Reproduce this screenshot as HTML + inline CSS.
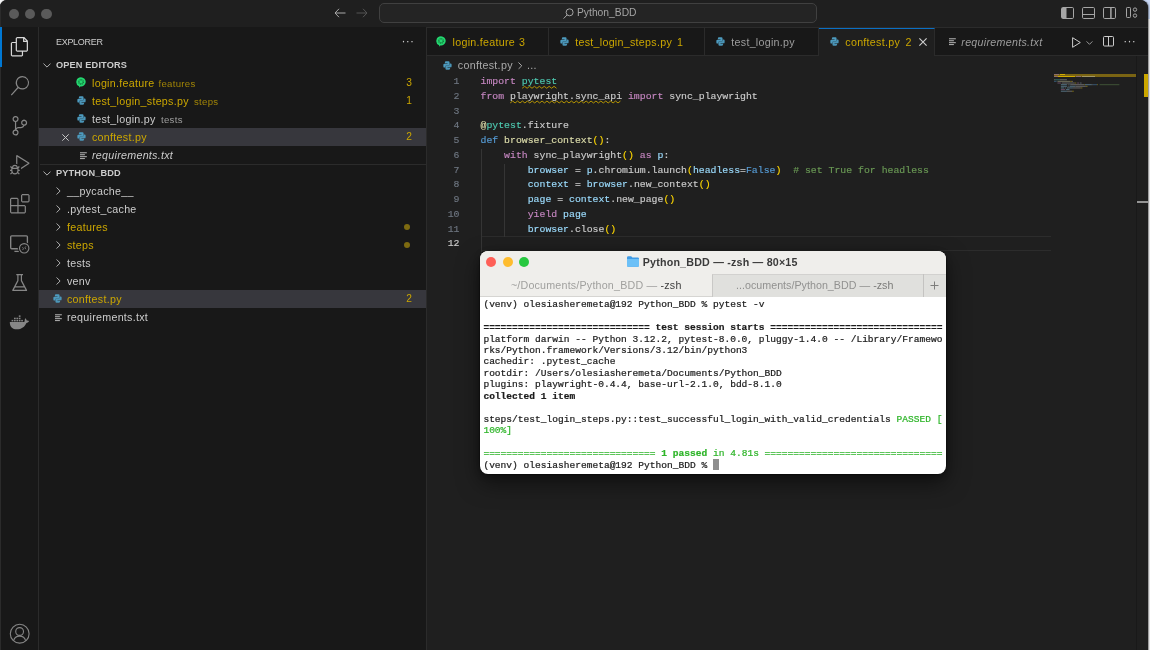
<!DOCTYPE html>
<html>
<head>
<meta charset="utf-8">
<title>conftest.py - Python_BDD</title>
<style>
*{box-sizing:border-box;margin:0;padding:0}
html,body{width:1150px;height:650px;overflow:hidden;background:#f7f7f8;font-family:"Liberation Sans",sans-serif;}
#win{will-change:transform;position:absolute;left:0;top:0;width:1148px;height:652px;background:#181818;border-radius:7px 8px 0 0;overflow:hidden;box-shadow:0.500px 0 1.500px rgba(0,0,0,.45);}
.abs{position:absolute}
/* title bar */
#title{position:absolute;left:0;top:0;width:1148px;height:27.500px;background:#1f1f1f;border-bottom:1px solid #2b2b2b;}
.tl{position:absolute;top:8.500px;width:10.300px;height:10.300px;border-radius:50%;background:#5a5a5a;}
#search{position:absolute;left:379px;top:3px;width:438px;height:20px;border:1px solid #404040;border-radius:5px;background:#242424;}
#search span{position:absolute;left:197px;top:3.200px;font-size:10.300px;color:#a4a4a4;letter-spacing:0px;}
/* activity bar */
#act{position:absolute;left:0;top:27px;width:39px;height:623px;background:#181818;border-right:1px solid #2b2b2b;}
#act:before{content:"";position:absolute;left:0;top:-27px;width:1px;height:650px;background:#2b2b2b;}
#act .ind{position:absolute;left:0;top:0;width:2px;height:40px;background:#0078d4;}
#act svg{position:absolute;left:8px;}
/* sidebar */
#side{position:absolute;left:39px;top:27px;width:388px;height:623px;background:#181818;border-right:1px solid #2b2b2b;}
.row{position:absolute;left:0;width:386px;height:18px;line-height:18px;font-size:10.700px;letter-spacing:0.280px;color:#cccccc;white-space:nowrap;}
.row.sel{background:#37373d;box-shadow:-1px 0 0 #37373d;}
.row .t{position:absolute;top:0;}
.row .d{position:absolute;top:0.500px;font-size:9.600px;letter-spacing:0.300px;}
.row .b{position:absolute;right:14px;top:0;font-size:10.200px;color:#cca700;letter-spacing:0}
.y{color:#cca700}
.hdr{position:absolute;font-size:9.200px;letter-spacing:0.150px;font-weight:bold;color:#cccccc;line-height:18px;height:18px;white-space:nowrap;}
.dot{position:absolute;left:364px;width:6px;height:6px;border-radius:50%;background:#7d6a10;}
svg{display:block;overflow:visible}


/* terminal */
#term{position:absolute;left:480px;top:251px;width:466px;height:223px;border-radius:8px;background:#ffffff;box-shadow:0 0 0 0.500px rgba(0,0,0,.55),0 9px 22px rgba(0,0,0,.5),0 2px 6px rgba(0,0,0,.3);overflow:hidden;}
#term .hd{position:absolute;left:0;top:0;width:466px;height:46px;background:#efeeeb;border-bottom:1px solid #d6d5d2;}
#term .tlt{position:absolute;top:6.100px;width:10px;height:10px;border-radius:50%;}
#tt{position:absolute;left:0;top:53.900px;font-family:"Liberation Mono",monospace;font-size:9.572px;line-height:11.450px;color:#1c1c1c;white-space:pre;}
#tt div{position:absolute;left:3.400px;height:11.450px;-webkit-text-stroke-width:0.220px}
.g{color:#2fb52a}
/* tabs */
#tabs{position:absolute;left:427px;top:27.500px;width:721px;height:28px;background:#181818;border-bottom:1px solid #2b2b2b;}
.tab{position:absolute;top:0;height:28px;border-right:1px solid #2b2b2b;font-size:10.700px;letter-spacing:0.280px;line-height:28px;color:#9d9d9d;white-space:nowrap;}
.tab.act{background:#1f1f1f;border-top:1.200px solid #0a6fc4;height:29px;line-height:26.800px;}
.tab span{position:absolute;top:0.500px}
.tab svg{position:absolute}
/* code */
#code{position:absolute;left:0;top:75.250px;-webkit-text-stroke-width:0.150px;width:721px;font-family:"Liberation Mono",monospace;font-size:9.847px;line-height:14.730px;color:#cccccc;white-space:pre;}
.ln{position:absolute;left:0;width:459.500px;text-align:right;color:#6e7681;height:14.730px;}
.cl{position:absolute;left:480.500px;height:14.730px;}
.k{color:#c586c0}.m{color:#4ec9b0}.b{color:#569cd6}.f{color:#dcdcaa}.v{color:#9cdcfe}.c{color:#6a9955}.p{color:#ffd700}
.sq{}
</style>
</head>
<body>
<div style="position:absolute;left:1140px;top:0;width:10px;height:19px;background:#c9d9f6"></div>
<div id="win">
<svg width="0" height="0" style="position:absolute">
<defs>
<symbol id="py" viewBox="0 0 10 10">
  <path fill="#4d9bbf" d="M3.3 0.4 H6 A1.3 1.3 0 0 1 7.3 1.7 V3.9 A1.1 1.1 0 0 1 6.2 5 H3.9 A1.3 1.3 0 0 0 2.6 6.3 V7.3 H1.7 A1.3 1.3 0 0 1 0.4 6 V4.3 A1.3 1.3 0 0 1 1.7 3 H5 V2.5 H2.1 V1.6 A1.2 1.2 0 0 1 3.3 0.4 Z"/>
  <path fill="#4d9bbf" d="M6.7 9.6 H4 A1.3 1.3 0 0 1 2.7 8.3 V6.1 A1.1 1.1 0 0 1 3.8 5 H6.1 A1.3 1.3 0 0 0 7.4 3.700 V2.7 H8.3 A1.3 1.3 0 0 1 9.6 4 V5.7 A1.3 1.3 0 0 1 8.3 7 H5 V7.5 H7.9 V8.4 A1.2 1.2 0 0 1 6.700 9.600 Z" opacity="0.95"/>
</symbol>
<symbol id="cuke" viewBox="0 0 10 11">
  <path fill="#23d66f" d="M5 0.2 A4.7 4.7 0 1 1 4.2 9.530 L3.3 10.7 L3.1 9.200 A4.7 4.7 0 0 1 5 0.2 Z"/>
  <circle cx="5" cy="4.900" r="2.200" fill="none" stroke="#0d5a2c" stroke-width="1.100" stroke-dasharray="1 0.600"/>
</symbol>
<symbol id="txt" viewBox="0 0 8 8">
  <path stroke="#c5c5c5" stroke-width="1" fill="none" d="M0 0.700 H7.400 M0 2.800 H5.300 M0 4.900 H7.400 M0 7 H5.300"/>
</symbol>
<symbol id="chd" viewBox="0 0 10 6">
  <path stroke="#c5c5c5" stroke-width="1.1" fill="none" d="M0.6 0.600 L5 5 L9.400 0.600"/>
</symbol>
<symbol id="chr" viewBox="0 0 6 10">
  <path stroke="#c5c5c5" stroke-width="1.1" fill="none" d="M0.6 0.600 L5 5 L0.600 9.400"/>
</symbol>
</defs></svg>

<!-- TITLE BAR -->
<div id="title">
  <div class="tl" style="left:8.800px"></div>
  <div class="tl" style="left:24.900px"></div>
  <div class="tl" style="left:41.400px"></div>
  <svg class="abs" style="left:334px;top:8px" width="12" height="10" viewBox="0 0 12 10" fill="none" stroke="#aaaaaa" stroke-width="1"><path d="M5 0.800 L1 5 L5 9.200 M1 5 H11.500"/></svg>
  <svg class="abs" style="left:356px;top:8px" width="12" height="10" viewBox="0 0 12 10" fill="none" stroke="#555555" stroke-width="1"><path d="M7 0.800 L11 5 L7 9.200 M11 5 H0.500"/></svg>
  <div id="search">
    <svg class="abs" style="left:183px;top:4px" width="11" height="11" viewBox="0 0 11 11" fill="none" stroke="#a4a4a4" stroke-width="1"><circle cx="6.600" cy="4.300" r="3.500"/><path d="M4.2 6.8 L0.6 10.6"/></svg>
    <span>Python_BDD</span>
  </div>
  <!-- layout icons -->
  <svg class="abs" style="left:1061px;top:7px" width="13" height="12" viewBox="0 0 13 12" fill="none" stroke="#a6a6a6" stroke-width="1"><rect x="0.5" y="0.5" width="12" height="11" rx="1.2"/><rect x="1" y="1" width="4.5" height="10" fill="#a6a6a6" stroke="none"/></svg>
  <svg class="abs" style="left:1082px;top:7px" width="13" height="12" viewBox="0 0 13 12" fill="none" stroke="#a6a6a6" stroke-width="1"><rect x="0.5" y="0.5" width="12" height="11" rx="1.2"/><path d="M0.5 7.5 H12.5"/></svg>
  <svg class="abs" style="left:1103px;top:7px" width="13" height="12" viewBox="0 0 13 12" fill="none" stroke="#a6a6a6" stroke-width="1"><rect x="0.5" y="0.5" width="12" height="11" rx="1.2"/><path d="M7.900 0.500 V11.500" stroke-width="1.500"/></svg>
  <svg class="abs" style="left:1126px;top:7px" width="12" height="12" viewBox="0 0 12 12" fill="none" stroke="#a6a6a6" stroke-width="1"><rect x="0.5" y="0.5" width="4" height="10" rx="0.8"/><circle cx="9" cy="2.6" r="1.7"/><circle cx="9" cy="8.6" r="1.7"/></svg>
</div>

<!-- ACTIVITY BAR -->
<div id="act">

  <div class="ind"></div>
  <!-- files -->
  <svg style="top:10px;left:10px" width="19.6" height="19.6" viewBox="0 0 24 24" fill="#d7d7d7"><path d="M17.5 0h-9L7 1.5V6H2.5L1 7.5v15.07L2.5 24h12.07L16 22.57V18h4.7l1.3-1.43V4.5L17.5 0zm0 2.12l2.38 2.38H17.5V2.12zm-3 20.38h-12v-15H7v9.07L8.500 18h6v4.5zm6-6h-12v-15H16V6h4.5v10.5z"/></svg>
  <!-- search -->
  <svg style="top:49px;left:10px" width="19.6" height="19.6" viewBox="0 0 24 24" fill="#868686"><path d="M15.25 0a8.25 8.25 0 0 0-6.18 13.72L1 22.88l1.12 1.12 8.05-9.12A8.251 8.251 0 1 0 15.25.01V0zm0 15a6.75 6.750 0 1 1 0-13.5 6.75 6.75 0 0 1 0 13.500z"/></svg>
  <!-- scm -->
  <svg style="top:89px;left:10px" width="19.6" height="19.6" viewBox="0 0 24 24" fill="#868686"><path d="M21.007 8.222A3.738 3.738 0 0 0 15.045 5.2a3.737 3.737 0 0 0 1.156 6.583 2.988 2.988 0 0 1-2.668 1.67h-2.99a4.456 4.456 0 0 0-2.989 1.165V7.400a3.737 3.737 0 1 0-1.494 0v9.117a3.776 3.776 0 1 0 1.816.099 2.99 2.990 0 0 1 2.668-1.667h2.99a4.484 4.484 0 0 0 4.223-3.039 3.736 3.736 0 0 0 3.250-3.687zM4.565 3.738a2.242 2.242 0 1 1 4.484 0 2.242 2.242 0 0 1-4.484 0zm4.484 16.441a2.242 2.242 0 1 1-4.484 0 2.242 2.242 0 0 1 4.484 0zm8.221-9.715a2.242 2.242 0 1 1 0-4.485 2.242 2.242 0 0 1 0 4.485z"/></svg>
  <!-- debug -->
  <svg style="top:128px;left:10px" width="19.6" height="19.6" viewBox="0 0 24 24" fill="#868686"><path d="M10.94 13.5l-1.32 1.32a3.73 3.73 0 0 0-7.24 0L1.060 13.5 0 14.56l1.72 1.72-.22.22V18H0v1.5h1.5v.08c.077.489.214.966.41 1.42L0 22.940 1.06 24l1.65-1.65A4.308 4.308 0 0 0 6 24a4.31 4.31 0 0 0 3.29-1.65L10.94 24 12 22.940 10.090 21c.198-.464.336-.951.41-1.45v-.1H12V18h-1.5v-1.5l-.22-.22L12 14.560l-1.06-1.06zM6 13.5a2.25 2.25 0 0 1 2.250 2.25h-4.5A2.25 2.25 0 0 1 6 13.500zm3 6a3.33 3.33 0 0 1-3 3 3.33 3.33 0 0 1-3-3v-2.25h6v2.25zm14.760-9.9v1.26L13.5 17.37V15.600l8.5-5.370L9 2v9.460a5.070 5.070 0 0 0-1.5-.72V.63L8.640 0l15.120 9.600z"/></svg>
  <!-- extensions -->
  <svg style="top:167px;left:10px" width="19.6" height="19.6" viewBox="0 0 24 24" fill="#868686"><path d="M13.5 1.5L15 0h7.5L24 1.5V9l-1.5 1.5H15L13.5 9V1.5zm1.5 0V9h7.5V1.5H15zM0 15V6l1.5-1.5H9L10.5 6v7.5H18l1.5 1.5v7.5L18 24H1.5L0 22.5V15zm9-1.5V6H1.5v7.5H9zM9 15H1.5v7.5H9V15zm1.5 7.500H18V15h-7.5v7.5z"/></svg>
  <!-- remote explorer -->
  <svg style="top:0;left:0" width="40" height="623" viewBox="0 27 40 623" fill="none" stroke="#868686" stroke-width="1.2">
    <rect x="10.700" y="235.800" width="16.700" height="12.900" rx="1" stroke-width="1.350"/>
    <path d="M14.400 251.400 H19" stroke-width="1.300"/>
    <circle cx="24.2" cy="248.3" r="6.3" fill="#181818" stroke="none"/>
    <circle cx="24.2" cy="248.3" r="4.7" stroke-width="1.1"/>
    <path d="M22.500 247.300 L23.500 248.700 L22.500 250.100 M25.900 246.400 L24.900 247.800 L25.900 249.200" stroke-width="0.850"/>
    <!-- beaker -->
    <path d="M16.3 274.6 H23 M17.9 274.6 V280.6 L12.8 290.4 H26.5 L21.4 280.6 V274.6 M14.6 286.9 H24.7" stroke-linejoin="round"/>
    <!-- docker -->
    <g stroke="none" fill="#868686">
      <path d="M9.8 321.9 H24.3 C24.9 320.6 24.7 319.3 25.2 318.2 C26.3 318.9 26.6 319.9 26.7 320.6 C27.6 320.4 28.5 320.6 29.1 321.1 C28.6 322.3 27.6 322.9 26.4 322.9 C24.9 326.6 21.6 329.3 16.8 329.3 C12.4 329.3 9.8 326.6 9.8 321.9 Z"/>
      <rect x="11.6" y="319.9" width="1.7" height="1.5"/><rect x="14" y="319.9" width="1.7" height="1.5"/><rect x="16.4" y="319.9" width="1.7" height="1.5"/><rect x="18.8" y="319.9" width="1.7" height="1.5"/><rect x="21.2" y="319.9" width="1.7" height="1.5"/>
      <rect x="14" y="317.7" width="1.7" height="1.5"/><rect x="16.4" y="317.7" width="1.7" height="1.5"/><rect x="18.8" y="317.7" width="1.7" height="1.5"/>
      <rect x="18.8" y="315.4" width="1.7" height="1.5"/>
    </g>
    <!-- account -->
    <circle cx="19.7" cy="633.7" r="9.4" stroke-width="1.1"/>
    <circle cx="19.6" cy="631.5" r="3.9" stroke-width="1.1"/>
    <path d="M13.6 640.6 C14.4 637.6 16.9 636.1 19.6 636.1 C22.3 636.1 24.8 637.6 25.6 640.6" stroke-width="1.1"/>
  </svg>
</div>

<!-- SIDEBAR -->
<div id="side"><div class="abs" style="left:1px;top:0;width:386px;height:623px">
  <div class="abs" style="left:16px;top:6px;font-size:9px;line-height:18px;color:#cccccc;letter-spacing:-0.3px">EXPLORER</div>
  <div class="abs" style="left:361.500px;top:5.200px;font-size:12px;line-height:18px;color:#cccccc;letter-spacing:0.300px">&middot;&middot;&middot;</div>

  <!-- OPEN EDITORS -->
  <svg class="abs" style="left:3px;top:36px" width="8" height="5"><use href="#chd"/></svg>
  <div class="hdr" style="left:16px;top:29px">OPEN EDITORS</div>

  <div class="row" style="top:47px"><svg class="abs" style="left:35.500px;top:3.100px" width="10" height="11"><use href="#cuke"/></svg><span class="t y" style="left:52px">login.feature</span><span class="d y" style="left:118.500px;opacity:.75">features</span><span class="b">3</span></div>
  <div class="row" style="top:65px"><svg class="abs" style="left:37px;top:3.900px" width="9" height="9"><use href="#py"/></svg><span class="t y" style="left:52px">test_login_steps.py</span><span class="d y" style="left:154px;opacity:.75">steps</span><span class="b">1</span></div>
  <div class="row" style="top:83px"><svg class="abs" style="left:37px;top:3.900px" width="9" height="9"><use href="#py"/></svg><span class="t" style="left:52px">test_login.py</span><span class="d" style="left:121px;color:#9d9d9d">tests</span></div>
  <div class="row sel" style="top:101px"><svg class="abs" style="left:22px;top:5.500px" width="7" height="7" viewBox="0 0 7 7"><path d="M0.3 0.300 L6.700 6.700 M6.700 0.300 L0.300 6.700" stroke="#c5c5c5" stroke-width="1" fill="none"/></svg><svg class="abs" style="left:37px;top:3.900px" width="9" height="9"><use href="#py"/></svg><span class="t y" style="left:52px">conftest.py</span><span class="b">2</span></div>
  <div class="row" style="top:119px"><svg class="abs" style="left:40px;top:5.500px" width="7.400" height="7.700"><use href="#txt"/></svg><span class="t" style="left:52px;font-style:italic">requirements.txt</span></div>

  <div class="abs" style="left:0;top:137px;width:386px;height:1px;background:#2b2b2b"></div>

  <!-- PYTHON_BDD -->
  <svg class="abs" style="left:3px;top:144px" width="8" height="5"><use href="#chd"/></svg>
  <div class="hdr" style="left:16px;top:137px">PYTHON_BDD</div>

  <div class="row" style="top:155px"><svg class="abs" style="left:16px;top:5px" width="5" height="8"><use href="#chr"/></svg><span class="t" style="left:27px">__pycache__</span></div>
  <div class="row" style="top:173px"><svg class="abs" style="left:16px;top:5px" width="5" height="8"><use href="#chr"/></svg><span class="t" style="left:27px">.pytest_cache</span></div>
  <div class="row" style="top:191px"><svg class="abs" style="left:16px;top:5px" width="5" height="8"><use href="#chr"/></svg><span class="t y" style="left:27px">features</span><span class="dot" style="top:6px"></span></div>
  <div class="row" style="top:209px"><svg class="abs" style="left:16px;top:5px" width="5" height="8"><use href="#chr"/></svg><span class="t y" style="left:27px">steps</span><span class="dot" style="top:6px"></span></div>
  <div class="row" style="top:227px"><svg class="abs" style="left:16px;top:5px" width="5" height="8"><use href="#chr"/></svg><span class="t" style="left:27px">tests</span></div>
  <div class="row" style="top:245px"><svg class="abs" style="left:16px;top:5px" width="5" height="8"><use href="#chr"/></svg><span class="t" style="left:27px">venv</span></div>
  <div class="row sel" style="top:263px"><svg class="abs" style="left:13px;top:3.900px" width="9" height="9"><use href="#py"/></svg><span class="t y" style="left:27px">conftest.py</span><span class="b">2</span></div>
  <div class="row" style="top:281px"><svg class="abs" style="left:15px;top:5.500px" width="7.400" height="7.700"><use href="#txt"/></svg><span class="t" style="left:27px">requirements.txt</span></div>
</div></div>

<!-- TABS -->
<div id="tabs">
  <div class="tab" style="left:0;width:122px"><svg style="left:8.900px;top:8.600px" width="10" height="11"><use href="#cuke"/></svg><span class="y" style="left:25.600px">login.feature</span><span class="y" style="left:92px">3</span></div>
  <div class="tab" style="left:122px;width:156px"><svg style="left:11.300px;top:9.500px" width="9" height="9"><use href="#py"/></svg><span class="y" style="left:26.200px">test_login_steps.py</span><span class="y" style="left:128px">1</span></div>
  <div class="tab" style="left:278px;width:114px"><svg style="left:11.400px;top:9.500px" width="9" height="9"><use href="#py"/></svg><span style="left:26.300px">test_login.py</span></div>
  <div class="tab act" style="left:392px;width:116px"><svg style="left:11.400px;top:8.500px" width="9" height="9"><use href="#py"/></svg><span class="y" style="left:26.300px">conftest.py</span><span class="y" style="left:86.600px">2</span><svg style="left:99.500px;top:9.500px" width="8" height="8" viewBox="0 0 8 8"><path d="M0.4 0.400 L7.600 7.600 M7.600 0.400 L0.400 7.600" stroke="#d0d0d0" stroke-width="1.100" fill="none"/></svg></div>
  <div class="tab" style="left:508px;width:121px;border-right:none"><svg style="left:14.200px;top:10.500px" width="7.400" height="7.700"><use href="#txt"/></svg><span style="left:26.300px;font-style:italic">requirements.txt</span></div>
  <!-- actions -->
  <svg class="abs" style="left:645px;top:9px" width="9" height="11" viewBox="0 0 9 11" fill="none" stroke="#cccccc" stroke-width="1" stroke-linejoin="round"><path d="M0.600 0.700 L8.300 5.500 L0.600 10.300 Z"/></svg>
  <svg class="abs" style="left:659px;top:13px" width="7" height="4"><use href="#chd"/></svg>
  <svg class="abs" style="left:676px;top:8.800px" width="11" height="10.500" viewBox="0 0 11 10.500" fill="none" stroke="#cccccc" stroke-width="1"><rect x="0.500" y="0.500" width="10" height="9.500" rx="1"/><path d="M5.500 0.500 V10"/></svg>
  <div class="abs" style="left:696.200px;top:4.700px;font-size:12px;line-height:18px;color:#cccccc;letter-spacing:0.300px">&middot;&middot;&middot;</div>
</div>

<!-- EDITOR -->
<div id="ed" class="abs" style="left:0;top:56px;width:1148px;height:594px;">
  <div class="abs" style="left:427px;top:0;width:721px;height:594px;background:#1f1f1f"></div>
</div>
<!-- breadcrumbs -->
<svg class="abs" style="left:443px;top:60.500px" width="9" height="9"><use href="#py"/></svg>
<div class="abs" style="left:457.800px;top:56px;font-size:10.700px;letter-spacing:0.300px;line-height:18px;color:#a9a9a9;white-space:nowrap">conftest.py</div>
<svg class="abs" style="left:517.500px;top:61.500px" width="4.500" height="7.500"><use href="#chr"/></svg>
<div class="abs" style="left:527px;top:56px;font-size:10.700px;line-height:18px;color:#a9a9a9;letter-spacing:0.300px">...</div>

<!-- current line + guides -->
<div class="abs" style="left:480.500px;top:236.400px;width:570.500px;height:14.200px;border-top:1px solid #2c2c2c;border-bottom:1px solid #2c2c2c;border-left:1px solid #2c2c2c"></div>
<div class="abs" style="left:480.500px;top:148.950px;width:1px;height:103px;background:#353535"></div>
<div class="abs" style="left:504.100px;top:163.680px;width:1px;height:73px;background:#353535"></div>

<!-- squiggles -->
<svg class="abs" style="left:0;top:0" width="700" height="110" viewBox="0 0 700 110" fill="none" stroke="#c4a000" stroke-width="0.900" stroke-linejoin="round"><path d="M522.20 88.25 L524.65 86.35 L527.10 88.25 L529.55 86.35 L532.00 88.25 L534.45 86.35 L536.90 88.25 L539.35 86.35 L541.80 88.25 L544.25 86.35 L546.70 88.25 L549.15 86.35 L551.60 88.25 L554.05 86.35 L556.50 88.25"/><path d="M510.20 102.95 L512.65 101.05 L515.10 102.95 L517.55 101.05 L520.00 102.95 L522.45 101.05 L524.90 102.95 L527.35 101.05 L529.80 102.95 L532.25 101.05 L534.70 102.95 L537.15 101.05 L539.60 102.95 L542.05 101.05 L544.50 102.95 L546.95 101.05 L549.40 102.95 L551.85 101.05 L554.30 102.95 L556.75 101.05 L559.20 102.95 L561.65 101.05 L564.10 102.95 L566.55 101.05 L569.00 102.95 L571.45 101.05 L573.90 102.95 L576.35 101.05 L578.80 102.95 L581.25 101.05 L583.70 102.95 L586.15 101.05 L588.60 102.95 L591.05 101.05 L593.50 102.95 L595.95 101.05 L598.40 102.95 L600.85 101.05 L603.30 102.95 L605.75 101.05 L608.20 102.95 L610.65 101.05 L613.10 102.95 L615.55 101.05 L618.00 102.95 L620.45 101.05"/></svg>
<div id="code">
    <div class="ln" style="top:0.00px">1</div><div class="cl" style="top:0.00px"><span class="k">import</span> <span class="m sq">pytest</span></div>
    <div class="ln" style="top:14.73px">2</div><div class="cl" style="top:14.73px"><span class="k">from</span> <span class="sq">playwright.sync_api</span> <span class="k">import</span> sync_playwright</div>
    <div class="ln" style="top:29.46px">3</div><div class="cl" style="top:29.46px"></div>
    <div class="ln" style="top:44.19px">4</div><div class="cl" style="top:44.19px"><span class="f">@</span><span class="m">pytest</span>.fixture</div>
    <div class="ln" style="top:58.92px">5</div><div class="cl" style="top:58.92px"><span class="b">def</span> <span class="f">browser_context</span><span class="p">()</span>:</div>
    <div class="ln" style="top:73.65px">6</div><div class="cl" style="top:73.65px">    <span class="k">with</span> sync_playwright<span class="p">()</span> <span class="k">as</span> <span class="v">p</span>:</div>
    <div class="ln" style="top:88.38px">7</div><div class="cl" style="top:88.38px">        <span class="v">browser</span> = <span class="v">p</span>.chromium.launch<span class="p">(</span><span class="v">headless</span>=<span class="b">False</span><span class="p">)</span>  <span class="c"># set True for headless</span></div>
    <div class="ln" style="top:103.11px">8</div><div class="cl" style="top:103.11px">        <span class="v">context</span> = <span class="v">browser</span>.new_context<span class="p">()</span></div>
    <div class="ln" style="top:117.84px">9</div><div class="cl" style="top:117.84px">        <span class="v">page</span> = <span class="v">context</span>.new_page<span class="p">()</span></div>
    <div class="ln" style="top:132.57px">10</div><div class="cl" style="top:132.57px">        <span class="k">yield</span> <span class="v">page</span></div>
    <div class="ln" style="top:147.30px">11</div><div class="cl" style="top:147.30px">        <span class="v">browser</span>.close<span class="p">()</span></div>
    <div class="ln" style="top:162.03px;color:#cccccc">12</div><div class="cl" style="top:162.03px"></div>
</div>

<!-- minimap -->
<div class="abs" style="left:1054px;top:74px;width:83px;height:3.400px;background:#7a6413"></div>
<div class="abs" style="left:1060px;top:74.100px;width:5.200px;height:1.300px;background:#d1ab00"></div>
<div class="abs" style="left:1054px;top:74.300px;width:5.200px;height:1px;background:#8f6f6a"></div>
<div class="abs" style="left:1058.300px;top:75.800px;width:16.300px;height:1.300px;background:#d1ab00"></div>
<div class="abs" style="left:1054px;top:75.900px;width:3.500px;height:1px;background:#8f6f6a"></div>
<div class="abs" style="left:1075.500px;top:75.900px;width:5.200px;height:1px;background:#8f6f6a"></div>
<div class="abs" style="left:1081.500px;top:75.900px;width:13px;height:1px;background:#a39762"></div>
<svg class="abs" style="left:1053.700px;top:74px;opacity:.62" width="83" height="20" viewBox="0 0 83 20"><rect x="0.00" y="5.22" width="0.86" height="1.050" fill="#9a9a7c"/><rect x="0.86" y="5.22" width="5.16" height="1.050" fill="#3b8f80"/><rect x="6.02" y="5.22" width="6.88" height="1.050" fill="#8e8e8e"/><rect x="0.00" y="6.86" width="2.58" height="1.050" fill="#42709a"/><rect x="3.44" y="6.86" width="12.90" height="1.050" fill="#9a9a7c"/><rect x="16.34" y="6.86" width="1.72" height="1.050" fill="#ab9310"/><rect x="18.06" y="6.86" width="0.86" height="1.050" fill="#8e8e8e"/><rect x="3.44" y="8.50" width="3.44" height="1.050" fill="#8f6289"/><rect x="7.74" y="8.50" width="12.90" height="1.050" fill="#8e8e8e"/><rect x="20.64" y="8.50" width="1.72" height="1.050" fill="#ab9310"/><rect x="23.22" y="8.50" width="1.72" height="1.050" fill="#8f6289"/><rect x="25.80" y="8.50" width="0.86" height="1.050" fill="#6f9bb3"/><rect x="26.66" y="8.50" width="0.86" height="1.050" fill="#8e8e8e"/><rect x="6.88" y="10.14" width="6.02" height="1.050" fill="#6f9bb3"/><rect x="13.76" y="10.14" width="0.86" height="1.050" fill="#8e8e8e"/><rect x="15.48" y="10.14" width="0.86" height="1.050" fill="#6f9bb3"/><rect x="16.34" y="10.14" width="13.76" height="1.050" fill="#8e8e8e"/><rect x="30.10" y="10.14" width="0.86" height="1.050" fill="#ab9310"/><rect x="30.96" y="10.14" width="6.88" height="1.050" fill="#6f9bb3"/><rect x="37.84" y="10.14" width="0.86" height="1.050" fill="#8e8e8e"/><rect x="38.70" y="10.14" width="4.30" height="1.050" fill="#42709a"/><rect x="43.00" y="10.14" width="0.86" height="1.050" fill="#ab9310"/><rect x="45.58" y="10.14" width="19.78" height="1.050" fill="#4f6e42"/><rect x="6.88" y="11.78" width="6.02" height="1.050" fill="#6f9bb3"/><rect x="13.76" y="11.78" width="0.86" height="1.050" fill="#8e8e8e"/><rect x="15.48" y="11.78" width="6.02" height="1.050" fill="#6f9bb3"/><rect x="21.50" y="11.78" width="10.32" height="1.050" fill="#8e8e8e"/><rect x="31.82" y="11.78" width="1.72" height="1.050" fill="#ab9310"/><rect x="6.88" y="13.42" width="3.44" height="1.050" fill="#6f9bb3"/><rect x="11.18" y="13.42" width="0.86" height="1.050" fill="#8e8e8e"/><rect x="12.90" y="13.42" width="6.02" height="1.050" fill="#6f9bb3"/><rect x="18.92" y="13.42" width="7.74" height="1.050" fill="#8e8e8e"/><rect x="26.66" y="13.42" width="1.72" height="1.050" fill="#ab9310"/><rect x="6.88" y="15.06" width="4.30" height="1.050" fill="#8f6289"/><rect x="12.04" y="15.06" width="3.44" height="1.050" fill="#6f9bb3"/><rect x="6.88" y="16.70" width="6.02" height="1.050" fill="#6f9bb3"/><rect x="12.90" y="16.70" width="5.16" height="1.050" fill="#8e8e8e"/><rect x="18.06" y="16.70" width="1.72" height="1.050" fill="#ab9310"/></svg>
<!-- scrollbar -->
<div class="abs" style="left:1135.900px;top:56px;width:1.400px;height:594px;background:#191919"></div>
<div class="abs" style="left:1144.300px;top:74px;width:3.700px;height:22.600px;background:#cca700"></div>
<div class="abs" style="left:1136.900px;top:201.200px;width:11.100px;height:1.900px;background:#949494"></div>

<!-- TERMINAL -->
<div id="term">
  <div class="hd">
    <div class="tlt" style="left:6px;background:#fe5f57"></div>
    <div class="tlt" style="left:22.500px;background:#febc2e"></div>
    <div class="tlt" style="left:38.900px;background:#28c840"></div>
    <svg class="abs" style="left:146.500px;top:5.300px" width="12" height="10.800" viewBox="0 0 12 10.800"><path d="M0 1.400 A1.200 1.200 0 0 1 1.200 0.200 H4.200 L5.400 1.400 H10.800 A1.200 1.200 0 0 1 12 2.600 V9.600 A1.200 1.200 0 0 1 10.800 10.800 H1.200 A1.200 1.200 0 0 1 0 9.600 Z" fill="#3f9be6"/><path d="M0 3 H12 V9.600 A1.200 1.200 0 0 1 10.800 10.800 H1.200 A1.200 1.200 0 0 1 0 9.600 Z" fill="#6cc0f7"/></svg>
    <div class="abs" style="left:162.700px;top:3px;font-size:10.700px;font-weight:bold;letter-spacing:0.200px;line-height:16px;color:#3a3a3a;white-space:nowrap">Python_BDD — -zsh — 80×15</div>
    <!-- tabs -->
    <div class="abs" style="left:231.600px;top:22.500px;width:234.400px;height:23.500px;background:#e0e0dd;border-left:1px solid #c9c8c6;border-top:1px solid #d2d1cf"></div>
    <div class="abs" style="left:442.500px;top:22.500px;width:1px;height:23.500px;background:#c4c3c1"></div>
    <div class="abs" style="left:30.900px;top:26.200px;font-size:10.700px;letter-spacing:0.200px;line-height:16px;color:#a0a09e;white-space:nowrap">~/Documents/Python_BDD — <span style="color:#3e3e3e">-zsh</span></div>
    <div class="abs" style="left:256px;top:26.200px;font-size:10.700px;letter-spacing:0.020px;line-height:16px;color:#919190;white-space:nowrap">...ocuments/Python_BDD — <span style="color:#7c7c7a">-zsh</span></div>
    <svg class="abs" style="left:449.500px;top:30px" width="9" height="9" viewBox="0 0 9 9"><path d="M4.500 0.500 V8.500 M0.500 4.500 H8.500" stroke="#7e7e7c" stroke-width="1" fill="none"/></svg>
  </div>
  <div id="tt">
    <div style="top:-5.70px">(venv) olesiasheremeta@192 Python_BDD % pytest -v</div>
    <div style="top:17.20px"><b>============================= test session starts ==============================</b></div>
    <div style="top:28.65px">platform darwin -- Python 3.12.2, pytest-8.0.0, pluggy-1.4.0 -- /Library/Framewo</div>
    <div style="top:40.10px">rks/Python.framework/Versions/3.12/bin/python3</div>
    <div style="top:51.55px">cachedir: .pytest_cache</div>
    <div style="top:63.00px">rootdir: /Users/olesiasheremeta/Documents/Python_BDD</div>
    <div style="top:74.45px">plugins: playwright-0.4.4, base-url-2.1.0, bdd-8.1.0</div>
    <div style="top:85.90px"><b>collected 1 item</b></div>
    <div style="top:108.80px">steps/test_login_steps.py::test_successful_login_with_valid_credentials <span class="g">PASSED [</span></div>
    <div style="top:120.25px"><span class="g">100%]</span></div>
    <div style="top:143.15px"><span class="g">============================== <b>1 passed</b> in 4.81s ===============================</span></div>
    <div style="top:154.60px">(venv) olesiasheremeta@192 Python_BDD % <span style="display:inline-block;width:5.700px;height:11px;background:#8e8e8e;vertical-align:-2.300px"></span></div>
  </div>
</div>
</div>
</body>
</html>
